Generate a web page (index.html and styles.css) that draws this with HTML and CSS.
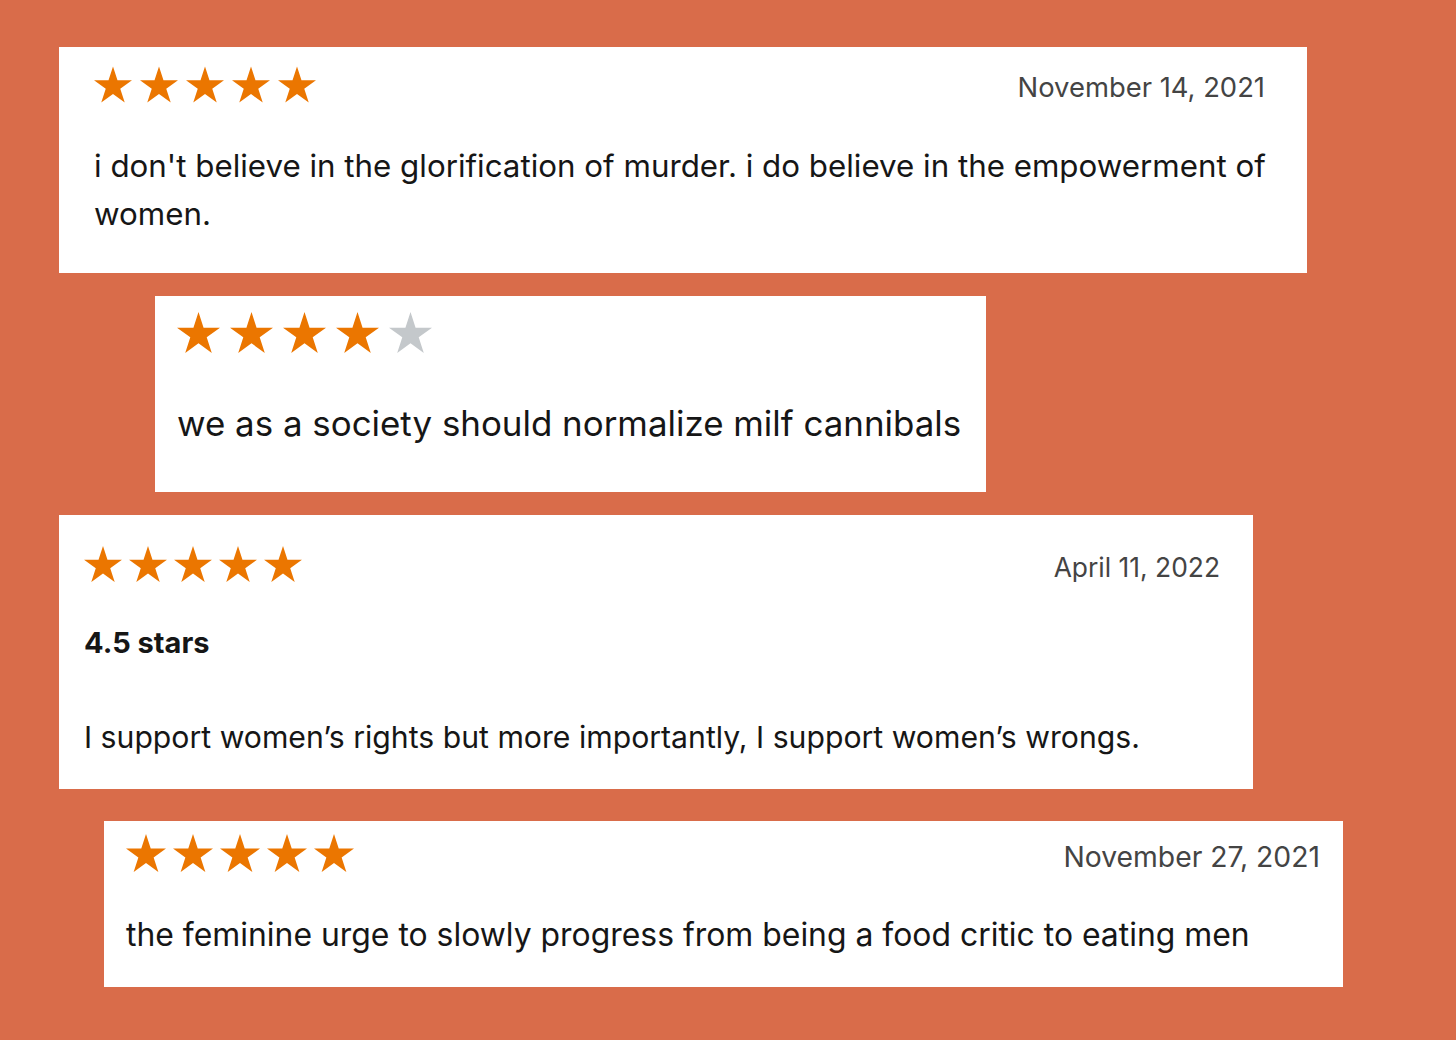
FILE: index.html
```html
<!DOCTYPE html>
<html>
<head>
<meta charset="utf-8">
<link rel="stylesheet" href="styles.css">
</head>
<body>
<svg width="0" height="0" class="defs">
  <defs>
    <polygon id="star" points="50,0 61.8,36.33 100,36.33 69.1,58.78 80.9,95.1 50,72.65 19.1,95.1 30.9,58.78 0,36.33 38.2,36.33"/>
  </defs>
</svg>
<main class="board">
  <section class="card card-1">
    <div class="head">
      <div class="stars">
        <svg class="star on" viewBox="0 0 100 95"><use href="#star"/></svg>
        <svg class="star on" viewBox="0 0 100 95"><use href="#star"/></svg>
        <svg class="star on" viewBox="0 0 100 95"><use href="#star"/></svg>
        <svg class="star on" viewBox="0 0 100 95"><use href="#star"/></svg>
        <svg class="star on" viewBox="0 0 100 95"><use href="#star"/></svg>
      </div>
      <div class="date">November 14, 2021</div>
    </div>
    <p class="text">i don't believe in the glorification of murder. i do believe in the empowerment of women.</p>
  </section>

  <section class="card card-2">
    <div class="head">
      <div class="stars">
        <svg class="star on" viewBox="0 0 100 95"><use href="#star"/></svg>
        <svg class="star on" viewBox="0 0 100 95"><use href="#star"/></svg>
        <svg class="star on" viewBox="0 0 100 95"><use href="#star"/></svg>
        <svg class="star on" viewBox="0 0 100 95"><use href="#star"/></svg>
        <svg class="star off" viewBox="0 0 100 95"><use href="#star"/></svg>
      </div>
    </div>
    <p class="text">we as a society should normalize milf cannibals</p>
  </section>

  <section class="card card-3">
    <div class="head">
      <div class="stars">
        <svg class="star on" viewBox="0 0 100 95"><use href="#star"/></svg>
        <svg class="star on" viewBox="0 0 100 95"><use href="#star"/></svg>
        <svg class="star on" viewBox="0 0 100 95"><use href="#star"/></svg>
        <svg class="star on" viewBox="0 0 100 95"><use href="#star"/></svg>
        <svg class="star on" viewBox="0 0 100 95"><use href="#star"/></svg>
      </div>
      <div class="date">April 11, 2022</div>
    </div>
    <h3 class="title">4.5 stars</h3>
    <p class="text">I support women’s rights but more importantly, I support women’s wrongs.</p>
  </section>

  <section class="card card-4">
    <div class="head">
      <div class="stars">
        <svg class="star on" viewBox="0 0 100 95"><use href="#star"/></svg>
        <svg class="star on" viewBox="0 0 100 95"><use href="#star"/></svg>
        <svg class="star on" viewBox="0 0 100 95"><use href="#star"/></svg>
        <svg class="star on" viewBox="0 0 100 95"><use href="#star"/></svg>
        <svg class="star on" viewBox="0 0 100 95"><use href="#star"/></svg>
      </div>
      <div class="date">November 27, 2021</div>
    </div>
    <p class="text">the feminine urge to slowly progress from being a food critic to eating men</p>
  </section>
</main>
</body>
</html>
```

FILE: styles.css
```css
html, body {
  margin: 0;
  padding: 0;
}
body {
  width: 1456px;
  height: 1040px;
  overflow: hidden;
  background: #d96c4a;
  font-family: Inter, Lato, sans-serif;
  font-variant-ligatures: none;
  color: #161616;
}
.defs {
  position: absolute;
  width: 0;
  height: 0;
}
.board {
  display: flex;
  flex-direction: column;
  align-items: flex-start;
  padding-top: 47px;
}
.card {
  background: #ffffff;
  box-sizing: border-box;
}
.head {
  display: flex;
  justify-content: space-between;
  align-items: flex-start;
}
.stars {
  display: flex;
}
.star {
  display: block;
}
.star.on { fill: #eb7600; }
.star.off { fill: #c4c8cb; }
.date {
  color: #444444;
  font-size: 27.4px;
  line-height: 34px;
}
.text {
  margin: 0;
  font-size: 30px;
}
.title {
  margin: 0;
  font-weight: 700;
  font-size: 29px;
}

/* card 1 */
.card-1 {
  margin-left: 59px;
  width: 1248px;
  height: 226px;
  padding: 19px 34px 0 35px;
}
.card-1 .stars { gap: 8px; }
.card-1 .star { width: 38px; height: 37px; }
.card-1 .date { margin-top: 4px; margin-right: 8px; }
.card-1 .text {
  margin-top: 38px;
  font-size: 31.3px;
  line-height: 48px;
}

/* card 2 */
.card-2 {
  margin-left: 155px;
  margin-top: 23px;
  width: 831px;
  height: 196px;
  padding: 16px 22px 0 22px;
}
.card-2 .stars { gap: 10px; }
.card-2 .star { width: 43px; height: 41px; }
.card-2 .text {
  margin-top: 50px;
  font-size: 34.9px;
  line-height: 40px;
}

/* card 3 */
.card-3 {
  margin-left: 59px;
  margin-top: 23px;
  width: 1194px;
  height: 274px;
  padding: 31px 33px 0 25px;
}
.card-3 .stars { gap: 7px; }
.card-3 .star { width: 38px; height: 36px; }
.card-3 .date { margin-top: 4px; font-size: 26.4px; }
.card-3 .title {
  margin-top: 42px;
  line-height: 34px;
}
.card-3 .text {
  margin-top: 59px;
  font-size: 30.2px;
  line-height: 36px;
}

/* card 4 */
.card-4 {
  margin-left: 104px;
  margin-top: 32px;
  width: 1239px;
  height: 166px;
  padding: 13px 23px 0 22px;
}
.card-4 .stars { gap: 7px; }
.card-4 .star { width: 40px; height: 38px; }
.card-4 .date { margin-top: 6px; font-size: 28.3px; }
.card-4 .text {
  margin-top: 42px;
  font-size: 31.9px;
  line-height: 38px;
}
```
